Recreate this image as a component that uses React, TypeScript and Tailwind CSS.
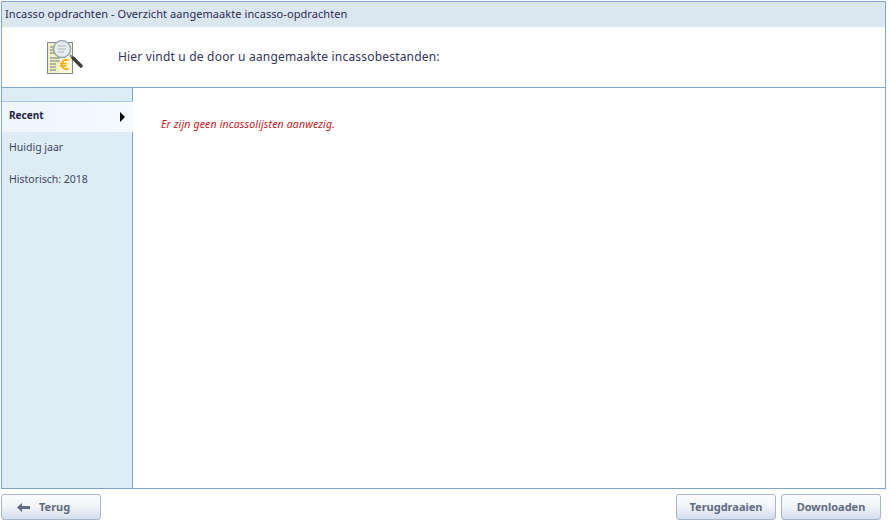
function ReportIcon() {
  return (
    <svg width="36" height="37" viewBox="0 0 36 37" className="block">
      <rect x="0.5" y="3.5" width="25" height="31" fill="#fbf8d8" stroke="#7f8a99" strokeWidth="1" />
      <rect x="1" y="4" width="11" height="30" fill="#f3f0c0" />
      <path d="M3 8h5M3 11h5M3 14h5M3 19h10M3 22h10M3 25h6M3 28h6M3 31h6" stroke="#6c7a80" strokeWidth="1" />
      <path d="M21.5 21.5a4.6 4.6 0 1 0 0 8M13 24.5h6.5M13 27h6.5" fill="none" stroke="#f2a900" strokeWidth="1.7" />
      <path d="M23 16l9 9" stroke="#8a8a8a" strokeWidth="2" />
      <path d="M26 19l8 8" stroke="#3c3c3c" strokeWidth="3.4" strokeLinecap="round" />
      <circle cx="15" cy="10" r="8.5" fill="#e6edf2" fillOpacity="0.9" stroke="#9aa9b5" strokeWidth="1.6" />
      <path d="M11 7h8M11 10h8M11 13h6" stroke="#a9b4bc" strokeWidth="1" />
    </svg>
  );
}

function Btn({ label }: { label: string }) {
  return (
    <button className="w-[100px] h-[26px] flex items-center justify-center rounded-[3px] border border-[#a9b6c6] bg-gradient-to-b from-[#fbfcfe] via-[#f0f4f9] to-[#d3dded] text-[11px] font-bold text-[#5f6b80]">
      {label}
    </button>
  );
}

export default function App() {
  return (
    <div className="w-[890px] h-[526px] bg-white pl-[1px] pt-[1px] font-['Noto_Sans','Open_Sans',sans-serif] overflow-hidden">
      <div className="w-[885px] h-[488px] border border-[#7ba5d6] flex flex-col">
        <div className="h-[25px] shrink-0 bg-[#dae6f0] flex items-center pl-[3px] text-[11px] tracking-[0.07px] text-[#2b2d55]">
          Incasso opdrachten - Overzicht aangemaakte incasso-opdrachten
        </div>

        <div className="h-[61px] shrink-0 flex items-center border-b border-[#7ba5d6]">
          <div className="pl-[45px] w-[116px]">
            <ReportIcon />
          </div>
          <span className="text-[12px] text-[#33365a] tracking-[0.19px]">
            Hier vindt u de door u aangemaakte incassobestanden:
          </span>
        </div>

        <div className="flex flex-1 min-h-0">
          <div className="w-[131px] shrink-0 bg-[#deedf5] border-r border-[#7ba5d6] pt-[13px] text-[10.5px] text-[#3f4468]">
            <div className="relative h-[31px] -mr-[1px] bg-gradient-to-r from-[#eef6fc] to-[#f4fafe] border-t border-[#a9c7e6] flex items-center pb-[4px] pl-[7px] text-[10px] font-bold text-[#1f2347]">
              Recent
              <span className="absolute right-[8px] top-[10px] w-0 h-0 border-y-[5px] border-y-transparent border-l-[5px] border-l-black" />
            </div>
            <div className="h-[32px] flex items-center pl-[7px]">Huidig jaar</div>
            <div className="h-[32px] flex items-center pl-[7px]">Historisch: 2018</div>
          </div>
          <div className="flex-1 pl-[28px] pt-[29px]">
            <p className="text-[10.5px] italic leading-[15px] tracking-[0.16px] text-[#c4161c]">
              Er zijn geen incassolijsten aanwezig.
            </p>
          </div>
        </div>
      </div>

      <div className="w-[880px] mt-[5px] flex justify-between">
        <button className="w-[100px] h-[26px] flex items-center pl-[15px] gap-[9px] rounded-[3px] border border-[#a9b6c6] bg-gradient-to-b from-[#fbfcfe] via-[#f0f4f9] to-[#d3dded] text-[11px] font-bold text-[#5f6b80]">
          <svg width="13" height="9" viewBox="0 0 13 9" className="block">
            <path d="M0 4.5L5 0v3h8v3H5v3z" fill="#5f6b80" />
          </svg>
          Terug
        </button>
        <div className="flex gap-[5px]">
          <Btn label="Terugdraaien" />
          <Btn label="Downloaden" />
        </div>
      </div>
    </div>
  );
}
